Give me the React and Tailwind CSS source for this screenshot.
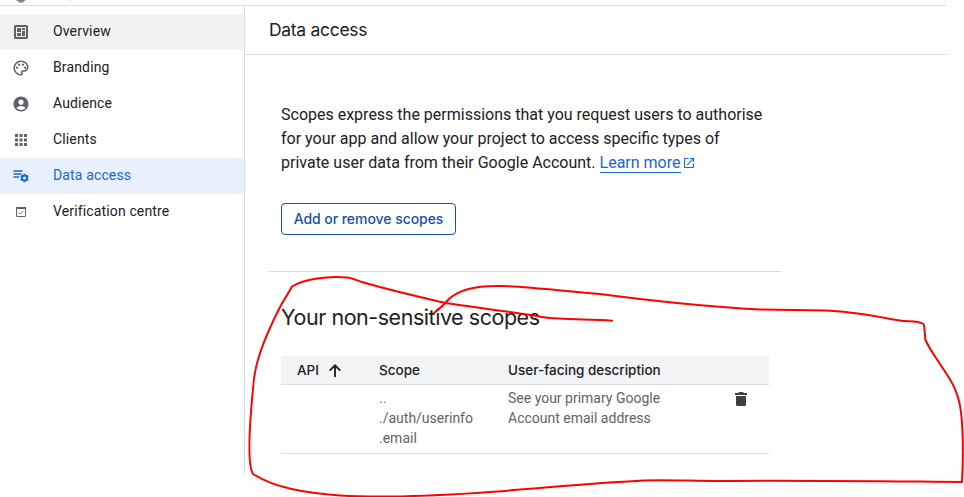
import { MdOutlinePalette, MdAccountCircle } from "react-icons/md";

function OverviewIcon() {
  return (
    <svg width="14" height="14" viewBox="0 0 14 14" fill="currentColor" fillRule="evenodd">
      <path d="M1.5 0h11A1.5 1.5 0 0 1 14 1.5v11a1.5 1.5 0 0 1-1.5 1.5h-11A1.5 1.5 0 0 1 0 12.5v-11A1.5 1.5 0 0 1 1.5 0zM2 2v10h10V2z" />
      <path d="M3 3h4v4H3zM8 3h3v2H8zM8 6h3v5H8zM3 8h4v3H3z" />
    </svg>
  );
}

function ClientsIcon() {
  return (
    <svg width="12" height="12" viewBox="0 0 12 12" fill="currentColor">
      <path d="M0 0h3v3H0zM4.500 0h3v3h-3zM9 0h3v3H9zM0 4.500h3v3H0zM4.500 4.500h3v3h-3zM9 4.500h3v3H9zM0 9h3v3H0zM4.500 9h3v3h-3zM9 9h3v3H9z" />
    </svg>
  );
}

function DataAccessIcon() {
  return (
    <svg width="16" height="14" viewBox="0 0 16 14" fill="none" stroke="currentColor">
      <path d="M.5 2h9M.5 5h8M.5 8H6" strokeWidth="1.700" />
      <circle cx="11.500" cy="9" r="2.500" strokeWidth="1.900" />
      <path d="M11.500 4.800v1.600M11.500 11.600v1.600M7.800 6.900l1.400.8M13.800 10.300l1.400.8M15.200 6.900l-1.400.8M9.200 10.300l-1.400.8" strokeWidth="2" />
    </svg>
  );
}

function VerificationIcon() {
  return (
    <svg width="10" height="10" viewBox="0 0 10 10" fill="none" stroke="currentColor">
      <rect x=".5" y=".5" width="9" height="9" rx=".3" />
      <path d="M0 1h10" strokeWidth="2" />
      <path d="M2.800 5.500l1.500 1.500 2.900-2.900" strokeWidth=".9" />
    </svg>
  );
}

function SortArrow() {
  return (
    <svg width="12" height="13" viewBox="0 0 12 13" fill="none" stroke="currentColor" strokeWidth="1.900">
      <path d="M6 13V1.500M.7 6.700L6 1.400l5.300 5.300" />
    </svg>
  );
}

function ExternalIcon() {
  return (
    <svg className="ml-[3px] inline align-[0px] text-[#1967d2]" width="10" height="10" viewBox="0 0 11 11" fill="none" stroke="currentColor" strokeWidth="1.200">
      <path d="M5 .6H1.200a.6.6 0 0 0-.6.6v8.600a.6.6 0 0 0 .6.6h8.600a.6.6 0 0 0 .6-.6V6M6.500.6h3.900v3.900M10.200.8L3.500 7.500" />
    </svg>
  );
}

function TrashIcon() {
  return (
    <svg className="mt-1 text-[#3c4043]" width="12" height="14" viewBox="0 0 12 14" fill="currentColor">
      <path d="M0 1h3.200l.8-1h4l.8 1H12v2H0zM1 4h10v8.500A1.500 1.500 0 0 1 9.500 14h-7A1.500 1.500 0 0 1 1 12.500z" />
    </svg>
  );
}

const items = [
  { label: "Overview", icon: <OverviewIcon />, row: "bg-[#f1f3f2] text-[#202124]", tint: "text-[#5f6368]" },
  { label: "Branding", icon: <MdOutlinePalette size={18} />, row: "text-[#202124]", tint: "text-[#5f6368]" },
  { label: "Audience", icon: <MdAccountCircle size={18} />, row: "text-[#202124]", tint: "text-[#5f6368]" },
  { label: "Clients", icon: <ClientsIcon />, row: "text-[#202124]", tint: "text-[#5f6368]" },
  { label: "Data access", icon: <DataAccessIcon />, row: "bg-[#e8f0fe] text-[#1967d2]", tint: "text-[#1967d2]" },
  { label: "Verification centre", icon: <VerificationIcon />, row: "text-[#202124]", tint: "text-[#5f6368]" },
];

function Sidebar() {
  return (
    <nav className="h-[468px] w-[245px] shrink-0 border-r border-[#dadce0] pt-2">
      {items.map((it) => (
        <div key={it.label} className={`flex h-9 items-center text-sm tracking-[0.140px] ${it.row}`}>
          <span className={`flex w-[42px] shrink-0 justify-center ${it.tint}`}>{it.icon}</span>
          <span className="ml-[11px] pb-0.5">{it.label}</span>
        </div>
      ))}
    </nav>
  );
}

function ScopesTable() {
  return (
    <div className="w-[488px] text-sm">
      <div className="flex h-[29px] items-center border-b border-[#dadce0] bg-[#f1f3f4] font-['Inter',sans-serif] text-[13.500px] font-medium text-[#202124]">
        <span className="ml-4 w-8 pt-0.5">API</span>
        <SortArrow />
        <span className="ml-[38px] w-[129px] pt-0.5">Scope</span>
        <span className="whitespace-nowrap pt-0.5">User-facing description</span>
      </div>
      <div className="flex h-[69px] border-b border-[#dadce0] pt-[3px] leading-5 text-[#5f6368]">
        <div className="ml-[98px] w-[129px]">..<br />./auth/userinfo<br />.email</div>
        <div className="w-[227px]">See your primary Google<br />Account email address</div>
        <TrashIcon />
      </div>
    </div>
  );
}

function Annotation() {
  return (
    <svg className="pointer-events-none absolute left-0 top-0" width="964" height="497" viewBox="0 0 964 497" fill="none" stroke="#ff0000" strokeWidth="2" strokeLinecap="round" strokeLinejoin="round">
      <path d="M612 320.700C590 318.500 565 320.500 542 317C512 312 480 308 445 303C420 297 385 289 362 282C356 280 352 278 347 277.500C328 275.500 304 279 292 286.500C288 294 283 301 279 309C263 341 254 365 253 389C249 430 248 466 253 474C275 488 305 493 340 495.500C380 498 445 495 480 492.700C540 488.500 590 483 640 480.700C660 479.500 690 481 720 481C790 480 860 481 962 482C963 463 964 439 961 412C958 388 949 378 940 364C935 356 930 350 925.500 340C924.500 334 925 328 923.500 324C917 320 907 322 900 320.500C874 316 850 311 825 310.500L760 309.500C714 307 653 301 600 294C563 291 515 285 495 286C477 286 460 290 450 298Q443 306 434 313" />
    </svg>
  );
}

export default function App() {
  return (
    <div className="relative h-[497px] w-[964px] overflow-hidden bg-white font-['Roboto',sans-serif] text-[#202124]">
      <header className="flex h-1.5 w-[947px] items-start border-b border-[#dadce0]">
        <svg className="ml-4" width="10" height="3" viewBox="0 0 10 3" fill="#80868b"><path d="M0 0h10L7 2 5 3 3 2z" /></svg>
        <span className="ml-[42px] h-px w-[3px] bg-[#e8eaed]" />
      </header>
      <div className="flex">
        <Sidebar />
        <main className="w-[702px]">
          <div className="flex h-[49px] items-center border-b border-[#dadce0] pl-6">
            <h1 className="font-['Inter',sans-serif] text-[17.500px] tracking-[-0.300px]">Data access</h1>
          </div>
          <div className="w-[536px] pl-6">
            <section className="h-[217px] border-b border-[#dadce0] pl-3 pt-12">
              <p className="whitespace-nowrap text-base leading-6">
                Scopes express the permissions that you request users to authorise<br />
                for your app and allow your project to access specific types of<br />
                private user data from their Google Account.{" "}
                <a className="inline-block h-[22px] border-b border-[#1967d2] text-[#1967d2]">Learn more</a>
                <ExternalIcon />
              </p>
              <button className="mt-[28px] flex h-8 w-[175px] items-center justify-center whitespace-nowrap rounded border border-[#174ea6] font-['Inter',sans-serif] text-sm font-medium tracking-[-0.050px] text-[#174ea6]">Add or remove scopes</button>
            </section>
            <section className="pl-3 pt-[29px]">
              <h2 className="mb-[23px] whitespace-nowrap font-['Inter',sans-serif] text-[21.500px] leading-8 tracking-[-0.460px]">Your non-sensitive scopes</h2>
              <ScopesTable />
            </section>
          </div>
        </main>
      </div>
      <Annotation />
    </div>
  );
}
